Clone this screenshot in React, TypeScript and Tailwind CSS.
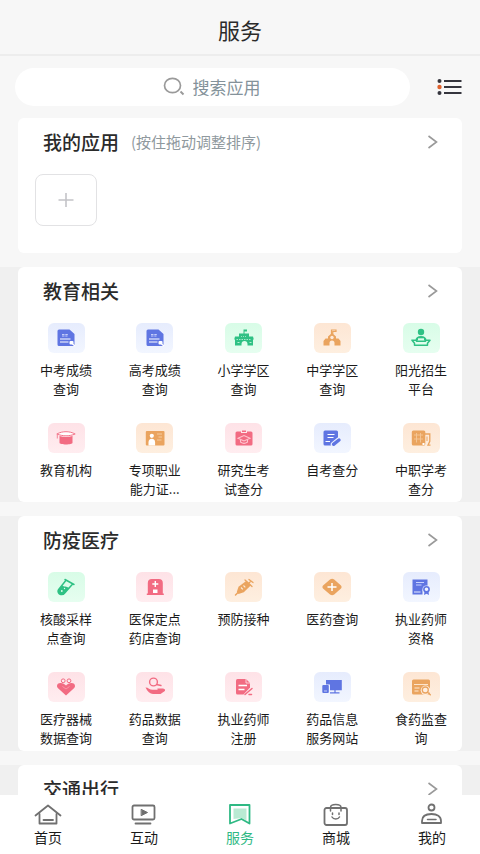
import type { ReactNode } from "react";

type Tone = "blue" | "green" | "orange" | "pink";

interface Service {
  label: string;
  tone: Tone;
  icon: ReactNode;
}

const toneClasses: Record<Tone, string> = {
  blue: "from-[#e6ecfd] to-[#f2f6ff] text-[#5f75e2]",
  green: "from-[#d8fce7] to-[#e6fef0] text-[#2fc184]",
  orange: "from-[#fde6d4] to-[#feefe0] text-[#eaa45f]",
  pink: "from-[#fee2e7] to-[#ffedf0] text-[#f26b82]",
};

const scoreIcon = (
  <>
    <path d="M3 1.500h10.500l5 4.500V17a1 1 0 0 1-1 1H3a1.500 1.500 0 0 1-1.500-1.500V3A1.500 1.500 0 0 1 3 1.500z" fill="currentColor" />
    <path d="M6 6.500h6.500M6 8h5.500" stroke="#c5cefa" strokeWidth="1.200" strokeDasharray="2.500 .8" />
    <path d="M4 11h10.500M4 14h8.500" stroke="#fff" strokeWidth="1.200" />
    <rect x="13.500" y="13" width="4" height="3.500" rx="1" fill="#fff" />
    <path d="M16.500 16l2.500 2" stroke="#fff" strokeWidth="1.500" />
  </>
);

const education: Service[] = [
  { label: "中考成绩查询", tone: "blue", icon: scoreIcon },
  { label: "高考成绩查询", tone: "blue", icon: scoreIcon },
  {
    label: "小学学区查询",
    tone: "green",
    icon: (
      <>
        <path d="M9.500 6V1.500h3.500v2h-2.500V6zM5 5.500h10v3h4l.8 3H19v6h-5.500v-1.500c0-2-1.200-3-3-3s-3 1-3 3v1.500H1v-6H.2l.8-3h4z" fill="currentColor" />
        <path d="M2.500 11.500h15" stroke="#d9fce8" strokeWidth=".7" strokeDasharray="1.500 1" />
        <path d="M7 8.500h6" stroke="#d9fce8" strokeWidth=".6" strokeDasharray="1 1" />
        <path d="M3.500 14.500h2M15.500 14.500h2" stroke="#d9fce8" strokeWidth=".8" />
      </>
    ),
  },
  {
    label: "中学学区查询",
    tone: "orange",
    icon: (
      <>
        <path d="M9.500 6.500V2h4.500v1.500h-3.200V6.500" fill="none" stroke="currentColor" strokeWidth="1.200" />
        <path d="M10 5l4 3.500v2h2.500L18.500 13v4.500h-6V15a2.500 2.500 0 0 0-5 0v2.500h-6V13l2-2.500H6v-2z" fill="currentColor" />
        <circle cx="10" cy="9.500" r="1.700" fill="#feeadb" />
      </>
    ),
  },
  {
    label: "阳光招生平台",
    tone: "green",
    icon: (
      <>
        <circle cx="10" cy="4" r="3.200" fill="currentColor" />
        <path d="M4.500 12.500C4.500 9.500 6.500 8 10 8s5.500 1.500 5.500 4.500z" fill="currentColor" />
        <path d="M7 10.300h6v2.700H7z" fill="#dcfdea" />
        <path d="M1 12.200h4.500v1h9v-1H19l-2.500 3v2h-13v-2z" fill="none" stroke="currentColor" strokeWidth="1.500" strokeLinejoin="round" />
      </>
    ),
  },
  {
    label: "教育机构",
    tone: "pink",
    icon: (
      <>
        <path d="M.8 6C4 4.300 7 3.700 10 3.700s6 .6 9.200 2.300C16 7.200 13 7.800 10 7.800S4 7.200.8 6z" fill="#fff" stroke="currentColor" strokeWidth=".9" />
        <path d="M3.500 8c4 1.300 9 1.300 13 0v6.700c0 2.300-13 2.300-13 0z" fill="currentColor" />
        <path d="M1.300 6.500v4" stroke="currentColor" strokeWidth=".8" />
      </>
    ),
  },
  {
    label: "专项职业能力证...",
    tone: "orange",
    icon: (
      <>
        <rect x=".8" y="3" width="18.700" height="14.500" rx="1" fill="currentColor" />
        <circle cx="6.800" cy="7.800" r="2.100" fill="#fff" />
        <path d="M3.500 17.500v-3c0-2.500 1.300-3.700 3.300-3.700s3.300 1.200 3.300 3.700v3z" fill="#fff" />
        <path d="M12 6h5M13.500 9h3.500M12 12h4.500" stroke="#f6cb9f" strokeWidth="1" />
      </>
    ),
  },
  {
    label: "研究生考试查分",
    tone: "pink",
    icon: (
      <>
        <path d="M3 3.500h4V5h6V3.500h4A1.500 1.500 0 0 1 18.500 5v11a1.500 1.500 0 0 1-1.500 1.500H3A1.500 1.500 0 0 1 1.500 16V5A1.500 1.500 0 0 1 3 3.500z" fill="currentColor" />
        <path d="M8 2.500h4V4H8z" fill="currentColor" />
        <path d="M4 10.300L10 7.500l6 2.800-6 2.700zM6.500 12v2c2 1.500 5 1.500 7 0v-2" fill="none" stroke="#ffc4ce" strokeWidth="1.100" />
      </>
    ),
  },
  {
    label: "自考查分",
    tone: "blue",
    icon: (
      <>
        <path d="M3 2.500h11.500A1.500 1.500 0 0 1 16 4v6l-6 7.500H3A1.500 1.500 0 0 1 1.500 16V4A1.500 1.500 0 0 1 3 2.500z" fill="currentColor" />
        <path d="M5.500 6.500h7M5.500 9.500h6M3.500 13.500h4.500" stroke="#fff" strokeWidth="1.100" />
        <path d="M11.500 16.300l5.500-4.300" stroke="#edf2ff" strokeWidth="5.500" strokeLinecap="round" />
        <path d="M11.500 16.300l5.500-4.300" stroke="currentColor" strokeWidth="3.400" strokeLinecap="round" />
      </>
    ),
  },
  {
    label: "中职学考查分",
    tone: "orange",
    icon: (
      <>
        <rect x=".8" y="2.500" width="13.500" height="15" rx="1.500" fill="currentColor" />
        <path d="M3 7h9M3 11h9M5.500 5v9.500M9.500 5v9.500" stroke="#f5c797" strokeWidth=".9" />
        <path d="M14 6h4.800v7.300L17 17.200h2.500" fill="none" stroke="currentColor" strokeWidth="1.300" />
        <path d="M16 8.500v4.500" stroke="currentColor" strokeWidth="1" />
        <path d="M11.500 15h2v2h-2z" fill="#fff" />
      </>
    ),
  },
];

const medical: Service[] = [
  {
    label: "核酸采样点查询",
    tone: "green",
    icon: (
      <>
        <path d="M9 2.500l9 5M9.800 3.500L2.500 12.700c-1.300 2 .2 4.300 2.200 4.800 1.500.3 3-.2 4-1.500l7.500-8.500" fill="none" stroke="currentColor" strokeWidth="1.500" strokeLinecap="round" />
        <path d="M6.200 8.500c2 1.500 4 .5 7 2.500l-4.500 5c-1 1.300-2.500 1.800-4 1.500-2-.5-3.500-2.800-2.200-4.800z" fill="currentColor" />
        <circle cx="5.800" cy="14" r=".9" fill="#dffcec" />
        <circle cx="8.500" cy="11.500" r=".7" fill="#dffcec" />
      </>
    ),
  },
  {
    label: "医保定点药店查询",
    tone: "pink",
    icon: (
      <>
        <path d="M2.800 16.500V6a4 4 0 0 1 4-4h7a4 4 0 0 1 4 4v10.500h1V18h-17v-1.500z" fill="currentColor" />
        <path d="M10.300 4v6M7.300 7h6" stroke="#fff" strokeWidth="1.400" />
        <path d="M8 12.500h4.500V16H8z" fill="#fff" />
      </>
    ),
  },
  {
    label: "预防接种",
    tone: "orange",
    icon: (
      <>
        <path d="M1.500 18l3-3" stroke="currentColor" strokeWidth="1.500" strokeLinecap="round" />
        <path d="M2.800 15L4.500 9.800 12.500 3.800l4.500 4.500L9.800 15.200 4.500 17z" fill="currentColor" />
        <path d="M11 3l7 6.500M14.500 6.500L17 4M15 2.500l4 3" stroke="currentColor" strokeWidth="1.300" strokeLinecap="round" />
        <path d="M7 10.500l1.800 1.800M9.500 8.500l1.800 1.800" stroke="#fdebd9" strokeWidth="1.100" />
      </>
    ),
  },
  {
    label: "医药查询",
    tone: "orange",
    icon: (
      <>
        <path d="M8 2.600a3.500 3.500 0 0 1 4.200 0l6.500 5.600a2.300 2.300 0 0 1 0 3.600l-6.500 5.600a3.500 3.500 0 0 1-4.200 0l-6.700-5.600a2.300 2.300 0 0 1 0-3.600z" fill="currentColor" />
        <path d="M10 6v8M5.500 10h9" stroke="#fff" strokeWidth="1.500" />
      </>
    ),
  },
  {
    label: "执业药师资格",
    tone: "blue",
    icon: (
      <>
        <path d="M1.500 2.500h15V9l-5 4v4.500h-10z" fill="currentColor" />
        <path d="M5 5.500h8M5 8h5.500" stroke="#c9d3ff" strokeWidth="1.200" />
        <path d="M3 15h6.500" stroke="#e8edff" strokeWidth="1" />
        <circle cx="15.500" cy="12.500" r="4" fill="#eff3ff" />
        <circle cx="15.500" cy="12.300" r="2.600" fill="none" stroke="currentColor" strokeWidth="1.600" />
        <path d="M13.500 14.500l-.5 3.500 2.500-1.300L18 18l-.5-3.500" fill="currentColor" />
      </>
    ),
  },
  {
    label: "医疗器械数据查询",
    tone: "pink",
    icon: (
      <>
        <path d="M10 18.500L1.800 11C-.2 8.500 1.800 5.800 4.700 6c2.100 0 3.800 1 5.300 2.500C11.500 7 13.200 6 15.300 6c2.900-.2 4.900 2.500 2.900 5z" fill="currentColor" />
        <circle cx="7.200" cy="3.800" r="1.900" fill="#ffe9ed" stroke="currentColor" strokeWidth="1" />
        <circle cx="13" cy="3.800" r="1.900" fill="#ffe9ed" stroke="currentColor" strokeWidth="1" />
        <path d="M6.500 9.500l3.500 2.500 3.500-2.500" fill="none" stroke="#ff9dae" strokeWidth=".8" />
      </>
    ),
  },
  {
    label: "药品数据查询",
    tone: "pink",
    icon: (
      <>
        <circle cx="8.500" cy="5" r="3.900" fill="none" stroke="currentColor" strokeWidth="1.400" />
        <path d="M11.500 7.500l4.500 1" stroke="currentColor" strokeWidth="1.300" strokeLinecap="round" />
        <path d="M.5 10.500c3 0 4 2.300 7 2.300h4.500c1 0 1-1 0-1.300h6c1.800.3 2.800 1.800 1.500 2.800L15.500 17H8C5 17 2.500 14.500.5 10.500z" fill="currentColor" />
      </>
    ),
  },
  {
    label: "执业药师注册",
    tone: "pink",
    icon: (
      <>
        <path d="M3.500 2h8.500l4 4v4.500l-6.500 7h-6A1.500 1.500 0 0 1 2 16V3.500A1.500 1.500 0 0 1 3.500 2z" fill="currentColor" />
        <path d="M12 2v4h4" fill="none" stroke="#ffe6ea" strokeWidth=".8" />
        <path d="M4.500 8.500h8.500M4.500 12.500h6" stroke="#fff" strokeWidth="1.500" />
        <path d="M11 17.500l7-6M15 17.500h2.500" stroke="currentColor" strokeWidth="1.500" strokeLinecap="round" />
      </>
    ),
  },
  {
    label: "药品信息服务网站",
    tone: "blue",
    icon: (
      <>
        <path d="M4 3h15.800v10.300H8V7.500H4z" fill="currentColor" />
        <rect x=".3" y="8" width="6.500" height="8" rx="1" fill="currentColor" />
        <path d="M2 14h3" stroke="#dfe6ff" strokeWidth=".8" />
        <path d="M8 15.800h9.500M13 13v2.500" stroke="currentColor" strokeWidth="1.200" />
      </>
    ),
  },
  {
    label: "食药监查询",
    tone: "orange",
    icon: (
      <>
        <path d="M2.500 2.500h15A1.500 1.500 0 0 1 19 4v12a1.500 1.500 0 0 1-1.500 1.500h-15A1.500 1.500 0 0 1 1 16V4a1.500 1.500 0 0 1 1.500-1.500z" fill="currentColor" />
        <path d="M3 7.500h14" stroke="#fce4cc" strokeWidth="1" />
        <path d="M3.500 11h5M3.500 14h4" stroke="#fde9d6" strokeWidth="1.200" />
        <circle cx="14.500" cy="13.300" r="4.800" fill="#feeee0" />
        <circle cx="14.300" cy="13" r="3" fill="none" stroke="currentColor" strokeWidth="1.300" />
        <path d="M16.500 15.200l2.800 2.600" stroke="currentColor" strokeWidth="1.400" strokeLinecap="round" />
      </>
    ),
  },
];

const tabs = [
  {
    label: "首页",
    icon: (
      <>
        <path d="M1.500 12.500L14 2.500l12.500 10" />
        <path d="M5.500 11v9.500h17V11" />
        <path d="M9.500 17h9.500" />
      </>
    ),
  },
  {
    label: "互动",
    icon: (
      <>
        <rect x="2.500" y="2.500" width="22" height="14" rx="1.500" />
        <path d="M11.500 6.500l6 3-6 3z" fill="currentColor" strokeWidth="1" />
        <path d="M5.500 20.500h15" />
      </>
    ),
  },
  {
    label: "服务",
    active: true,
    icon: (
      <>
        <path d="M7.500 5.500h13v12l-4.500-2.500-8.500 1z" fill="#b9ead3" stroke="none" />
        <path d="M4 2h19.500v18.500L15.500 16 4 20.500z" />
      </>
    ),
  },
  {
    label: "商城",
    icon: (
      <>
        <rect x="2.500" y="5" width="22.500" height="17" rx="2" />
        <path d="M8.500 8V4.500c0-4 10.500-4 10.500 0V8" strokeWidth="1.500" />
        <path d="M10.500 10v1.500M17 10v1.500M10 14c1.500 2.700 6 2.700 7.500 0" strokeWidth="1.500" />
      </>
    ),
  },
  {
    label: "我的",
    icon: (
      <>
        <circle cx="13.500" cy="4.500" r="3" />
        <path d="M4 20v-2c0-5 4-7 9.500-7s9.500 2 9.500 7v2z" />
        <path d="M9.500 16.500h8.500" strokeWidth="1.500" />
      </>
    ),
  },
];

function CardHeader({ title, hint }: { title: string; hint?: string }) {
  return (
    <div className="flex h-12 items-center pr-[22px] pl-[25px]">
      <h2 className="text-[19px] font-medium text-[#2b2b2b]">{title}</h2>
      {hint && <span className="ml-3 text-[15px] text-[#8f999e]">{hint}</span>}
      <button type="button" aria-label={`${title}更多`} className="ml-auto">
        <svg className="h-4 w-4" viewBox="0 0 16 16" fill="none" stroke="#999" strokeWidth="1.600">
          <path d="M4.500 2l8 6-8 6" />
        </svg>
      </button>
    </div>
  );
}

function ServiceCard({ title, services }: { title: string; services: Service[] }) {
  return (
    <section className="mx-[18px] rounded-md bg-white pb-1">
      <CardHeader title={title} />
      <div className="grid grid-cols-[repeat(5,56px)] justify-between gap-y-[25px] pt-2 pr-[13px] pl-5">
        {services.map((s) => (
          <button key={s.label} type="button" className="flex flex-col items-center">
            <span className={`flex h-[30px] w-[37px] items-center justify-center rounded-md bg-linear-to-b ${toneClasses[s.tone]}`}>
              <svg className="h-5 w-5" viewBox="0 0 20 20" fill="none">
                {s.icon}
              </svg>
            </span>
            <span className="mt-[7px] line-clamp-2 text-[13px] leading-[19px] text-[#1a1a1a]">{s.label}</span>
          </button>
        ))}
      </div>
    </section>
  );
}

export default function App() {
  return (
    <div className="flex h-screen flex-col bg-[#f7f7f7] font-['Noto_Sans_CJK_SC',sans-serif]">
      <header className="flex h-14 shrink-0 items-center justify-center border-b-2 border-[#ededed] pt-1">
        <h1 className="text-[22px] text-[#2b2b2b]">服务</h1>
      </header>

      <main className="min-h-0 flex-1 overflow-y-auto [scrollbar-width:none]">
        <div className="flex items-center pt-3 pr-[18px] pl-[15px]">
          <label className="flex h-[38px] flex-1 items-center justify-center rounded-full bg-white">
            <svg className="mr-2 h-5 w-[22px]" viewBox="0 0 22 20" fill="none" stroke="#9a9a9a" strokeWidth="1.700">
              <ellipse cx="9.500" cy="8.500" rx="8" ry="7.200" />
              <path d="M17.500 14.500l3 3" strokeWidth="2" />
            </svg>
            <input
              type="text"
              aria-label="搜索应用"
              placeholder="搜索应用"
              className="w-[70px] bg-transparent text-[17px] outline-none placeholder:text-[#84929a]"
            />
          </label>
          <button type="button" aria-label="应用列表" className="ml-[27px]">
            <svg className="h-[18px] w-[25px]" viewBox="0 0 25 18" stroke="#35353d" strokeWidth="2">
              <path d="M7 3h17.500M7 9h17.500M7 15h17.500" />
              <circle cx="2.500" cy="3" r="2" fill="#35353d" stroke="none" />
              <circle cx="2.500" cy="9" r="2.200" fill="#e0622d" stroke="none" />
              <circle cx="2.500" cy="15" r="2" fill="#35353d" stroke="none" />
            </svg>
          </button>
        </div>

        <section className="mx-[18px] mt-3 rounded-md bg-white pb-[27px]">
          <CardHeader title="我的应用" hint="(按住拖动调整排序)" />
          <div className="pt-2 pl-[17px]">
            <button
              type="button"
              aria-label="添加应用"
              className="flex h-[52px] w-[62px] items-center justify-center rounded-lg border border-[#e2e2e4]"
            >
              <svg className="h-4 w-4" viewBox="0 0 16 16" stroke="#c4c4c8" strokeWidth="1.600">
                <path d="M8 1v14M.5 8h15" />
              </svg>
            </button>
          </div>
        </section>

        <div className="mt-[14px] space-y-[14px]">
          <div className="bg-[#f0f0f0]">
            <ServiceCard title="教育相关" services={education} />
          </div>
          <div className="bg-[#f0f0f0]">
            <ServiceCard title="防疫医疗" services={medical} />
          </div>
          <div className="bg-[#f0f0f0]">
            <ServiceCard title="交通出行" services={[]} />
          </div>
        </div>
      </main>

      <nav className="grid shrink-0 grid-cols-5 bg-white pt-2 pb-[7px]">
        {tabs.map((t) => (
          <button
            key={t.label}
            type="button"
            className={t.active ? "flex flex-col items-center text-[#2fb984]" : "flex flex-col items-center text-[#707070]"}
          >
            <svg
              className="h-6 w-7"
              viewBox="0 0 28 24"
              fill="none"
              stroke="currentColor"
              strokeWidth="1.800"
              strokeLinecap="round"
              strokeLinejoin="round"
            >
              {t.icon}
            </svg>
            <span className={t.active ? "text-sm leading-5" : "text-sm leading-5 text-[#1a1a1a]"}>{t.label}</span>
          </button>
        ))}
      </nav>
    </div>
  );
}
